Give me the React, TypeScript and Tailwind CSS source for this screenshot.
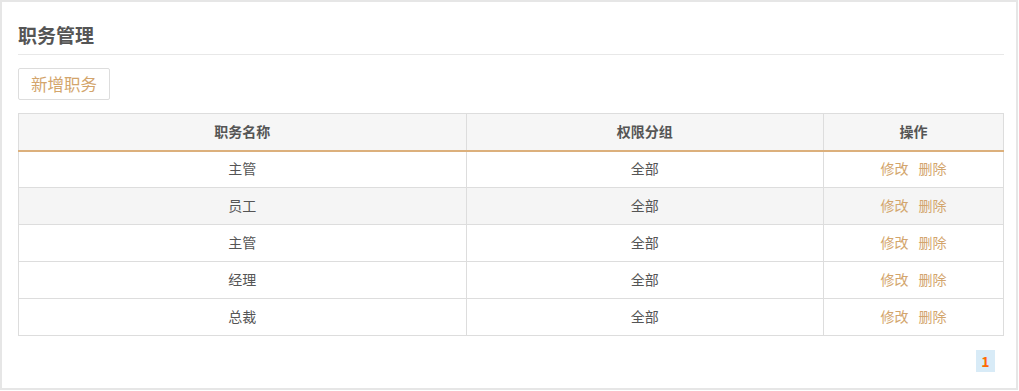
import React from "react";

const rows = [
  { name: "主管", group: "全部" },
  { name: "员工", group: "全部", hover: true },
  { name: "主管", group: "全部" },
  { name: "经理", group: "全部" },
  { name: "总裁", group: "全部" },
];

const font = {
  fontFamily: '"Noto Sans CJK SC", "Noto Sans", sans-serif',
};

export default function App() {
  return (
    <div className="w-[1019px] h-[391px] bg-white" style={font}>
      <div className="w-[1018px] h-[390px] border-2 border-[#e6e6e6] pl-4 pr-[12px]">
        <div className="pt-[20px] pb-[6px] border-b border-[#e8e8e8] text-[19px] font-bold leading-[26px] text-[#555]">
          职务管理
        </div>
        <div className="mt-[13px]">
          <button className="h-[32px] w-[92px] border border-[#dddddd] rounded-[2px] bg-white text-[16.5px] text-[#d3a56c] leading-[30px]">
            新增职务
          </button>
        </div>
        <table className="mt-[13px] w-full border-collapse border border-[#dddddd] text-[14px] text-[#555]">
          <colgroup>
            <col className="w-[448px]" />
            <col className="w-[358px]" />
            <col className="w-[180px]" />
          </colgroup>
          <thead>
            <tr className="h-[37px] bg-[#f6f6f6] border-b-2 border-[#dcb07c]">
              <th className="border-r border-[#dddddd] font-bold text-[#555]">职务名称</th>
              <th className="border-r border-[#dddddd] font-bold text-[#555]">权限分组</th>
              <th className="font-bold text-[#555]">操作</th>
            </tr>
          </thead>
          <tbody>
            {rows.map((r, i) => (
              <tr
                key={i}
                className={`h-[37px] border-b border-[#dddddd] ${r.hover ? "bg-[#f5f5f5]" : "bg-white"}`}
              >
                <td className="border-r border-[#dddddd] text-center pb-[2px]">{r.name}</td>
                <td className="border-r border-[#dddddd] text-center pb-[2px]">{r.group}</td>
                <td className="text-center text-[#d3a56c] pb-[2px]">
                  <span className="inline-flex gap-[10px]">
                    <span>修改</span>
                    <span>删除</span>
                  </span>
                </td>
              </tr>
            ))}
          </tbody>
        </table>
        <div className="mt-[14px] flex justify-end pr-[9px]">
          <span className="flex h-[22px] w-[19px] items-center justify-center bg-[#d8ebf7] text-[14px] font-bold text-[#ff6a00]">
            1
          </span>
        </div>
      </div>
    </div>
  );
}
